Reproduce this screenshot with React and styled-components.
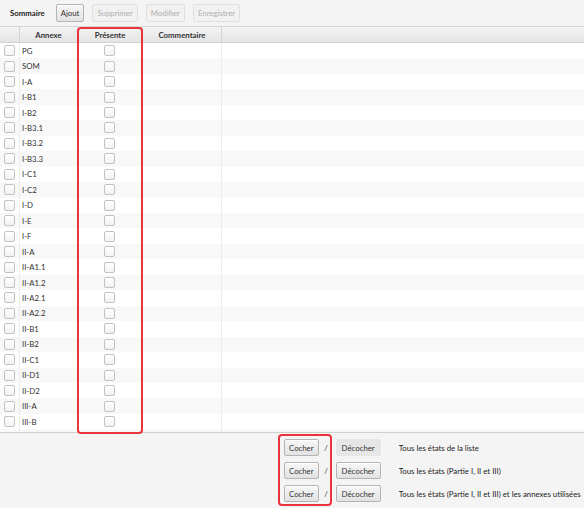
import React from "react";
import styled, { createGlobalStyle } from "styled-components";

const GlobalStyle = createGlobalStyle`
  html, body { margin: 0; padding: 0; background: #f4f4f4; }
  body { font-family: "Lato", "Open Sans", sans-serif; color: #333; }
  * { box-sizing: border-box; }
`;

const FS = 7.8;

const Window = styled.div`
  position: relative;
  width: 584px;
  height: 508px;
  display: flex;
  flex-direction: column;
  background: #f4f4f4;
  overflow: hidden;
`;

const Toolbar = styled.div`
  height: 27px;
  flex: none;
  display: flex;
  align-items: center;
  padding: 0 0 0 10px;
  gap: 8px;
  border-bottom: 1px solid #d6d6d6;
`;

const Title = styled.span`
  font-weight: 700;
  font-size: ${FS}px;
  margin-right: 3px;
  color: #222;
`;

const Btn = styled.button`
  font-family: inherit;
  font-size: ${FS}px;
  height: ${(p) => p.$h || 18}px;
  padding: 0 ${(p) => p.$px || 5}px;
  border-radius: 2px;
  border: 1px solid ${(p) => (p.disabled ? "#e0e0e0" : p.$flat ? "transparent" : "#b4b4b4")};
  background: ${(p) =>
    p.disabled ? "#f1f1f1" : p.$flat ? "#e6e6e6" : "linear-gradient(#f7f7f7, #e2e2e2)"};
  color: ${(p) => (p.disabled ? "#b0b0b0" : "#333")};
  box-shadow: ${(p) => (p.disabled || p.$flat ? "none" : "inset 0 1px 0 #fff")};
  cursor: default;
`;

const TableArea = styled.div`
  flex: 1;
  display: flex;
  flex-direction: column;
  background: #fff;
  overflow: hidden;
  border-bottom: 1px solid #cfcfcf;
`;

const cols = "20px 58px 65px 79px 1fr";

const HeaderRow = styled.div`
  flex: none;
  height: 16px;
  display: grid;
  grid-template-columns: ${cols};
  background: linear-gradient(#f3f3f3, #e4e4e4);
  border-bottom: 1px solid #d3d3d3;
`;

const HeadCell = styled.div`
  display: flex;
  align-items: center;
  justify-content: center;
  font-weight: 700;
  font-size: ${FS}px;
  color: #333;
  border-right: ${(p) => (p.$last ? "none" : "1px solid #d3d3d3")};
`;

const Row = styled.div`
  flex: none;
  height: 15.46px;
  display: grid;
  grid-template-columns: ${cols};
  background: ${(p) => (p.$odd ? "#f8f8f8" : "#fff")};
`;

const Cell = styled.div`
  display: flex;
  align-items: center;
  padding-left: ${(p) => p.$pl || 0}px;
  font-size: ${FS}px;
  color: #333;
  border-right: ${(p) => (p.$last ? "none" : "1px solid #ececec")};
`;

const Check = styled.span`
  display: inline-block;
  width: 11px;
  height: 11px;
  border: 1px solid #c2c2c2;
  border-radius: 2px;
  background: linear-gradient(#ffffff, #f2f2f2);
`;

const Bottom = styled.div`
  flex: none;
  height: 75px;
  display: grid;
  grid-template-columns: auto auto auto 1fr;
  grid-auto-rows: 23px;
  align-items: center;
  padding: 3px 0 0 284px;
`;

const Slash = styled.span`
  font-size: ${FS}px;
  color: #333;
  width: 17px;
  padding-right: 2px;
  text-align: center;
`;

const Desc = styled.span`
  font-size: ${FS}px;
  color: #222;
  padding-left: 18px;
  white-space: nowrap;
`;

const Highlight = styled.div`
  position: absolute;
  left: ${(p) => p.$x}px;
  top: ${(p) => p.$y}px;
  width: ${(p) => p.$w}px;
  height: ${(p) => p.$h}px;
  border: 2px solid #e8343a;
  border-radius: 4px;
  pointer-events: none;
`;

const annexes = [
  "PG", "SOM", "I-A", "I-B1", "I-B2", "I-B3.1", "I-B3.2", "I-B3.3",
  "I-C1", "I-C2", "I-D", "I-E", "I-F", "II-A", "II-A1.1", "II-A1.2",
  "II-A2.1", "II-A2.2", "II-B1", "II-B2", "II-C1", "II-D1", "II-D2",
  "III-A", "III-B", "III-C",
];

const actions = [
  { label: "Tous les états de la liste", flat: true },
  { label: "Tous les états (Partie I, II et III)" },
  { label: "Tous les états (Partie I, II et III) et les annexes utilisées" },
];

export default function App() {
  return (
    <>
      <GlobalStyle />
      <Window>
        <Toolbar>
          <Title>Sommaire</Title>
          <Btn $px={4}>Ajout</Btn>
          <Btn $px={4} disabled>Supprimer</Btn>
          <Btn $px={4} disabled>Modifier</Btn>
          <Btn $px={4} disabled>Enregistrer</Btn>
        </Toolbar>
        <TableArea>
          <HeaderRow>
            <HeadCell />
            <HeadCell>Annexe</HeadCell>
            <HeadCell>Présente</HeadCell>
            <HeadCell>Commentaire</HeadCell>
            <HeadCell $last />
          </HeaderRow>
          {annexes.map((a, i) => (
            <Row key={a} $odd={i % 2 === 1}>
              <Cell $pl={4}>
                <Check />
              </Cell>
              <Cell $pl={2}>{a}</Cell>
              <Cell $pl={26}>
                <Check />
              </Cell>
              <Cell />
              <Cell $last />
            </Row>
          ))}
        </TableArea>
        <Bottom>
          {actions.map((a) => (
            <React.Fragment key={a.label}>
              <Btn $h={17} $px={4}>Cocher</Btn>
              <Slash>/</Slash>
              <Btn $h={17} $px={5} $flat={a.flat}>
                Décocher
              </Btn>
              <Desc>{a.label}</Desc>
            </React.Fragment>
          ))}
        </Bottom>
        <Highlight $x={77} $y={27} $w={66} $h={407} />
        <Highlight $x={278} $y={434} $w={54} $h={72} />
      </Window>
    </>
  );
}
